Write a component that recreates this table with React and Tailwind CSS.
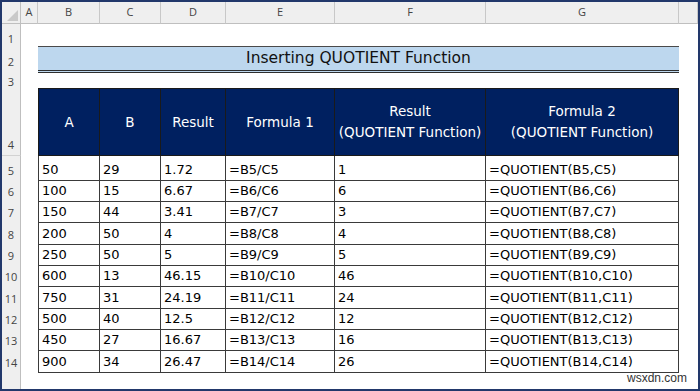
import React from "react";

const cols = "grid grid-cols-[19px_17px_62px_61px_65px_109px_151px_193px_1fr]";

const data = [
  ["50", "29", "1.72", "=B5/C5", "1", "=QUOTIENT(B5,C5)"],
  ["100", "15", "6.67", "=B6/C6", "6", "=QUOTIENT(B6,C6)"],
  ["150", "44", "3.41", "=B7/C7", "3", "=QUOTIENT(B7,C7)"],
  ["200", "50", "4", "=B8/C8", "4", "=QUOTIENT(B8,C8)"],
  ["250", "50", "5", "=B9/C9", "5", "=QUOTIENT(B9,C9)"],
  ["600", "13", "46.15", "=B10/C10", "46", "=QUOTIENT(B10,C10)"],
  ["750", "31", "24.19", "=B11/C11", "24", "=QUOTIENT(B11,C11)"],
  ["500", "40", "12.5", "=B12/C12", "12", "=QUOTIENT(B12,C12)"],
  ["450", "27", "16.67", "=B13/C13", "16", "=QUOTIENT(B13,C13)"],
  ["900", "34", "26.47", "=B14/C14", "26", "=QUOTIENT(B14,C14)"],
];

function RowHead({ n }) {
  return (
    <div className="flex items-center justify-center pt-[7px] bg-[#efefef] border-r border-r-[#bfbfbf] border-b border-b-[#d2d2d2] text-[11px] text-[#444] font-['Open_Sans',sans-serif]">
      {n}
    </div>
  );
}

export default function App() {
  const letters = ["A", "B", "C", "D", "E", "F", "G", ""];
  return (
    <div className="w-[700px] h-[391px] border-2 border-[#22386b] bg-white overflow-hidden flex flex-col font-['DejaVu_Sans',sans-serif]">
      {/* column header */}
      <div className={`${cols} h-[22px] shrink-0`}>
        <div className="relative bg-[#efefef] border-r border-r-[#bfbfbf] border-b border-b-[#bfbfbf]">
          <svg className="absolute right-[2px] bottom-[2px]" width="11" height="11" viewBox="0 0 11 11">
            <polygon points="11,0 11,11 0,11" fill="#c9c9c9" />
          </svg>
        </div>
        {letters.map((l, i) => (
          <div
            key={i}
            className="flex items-center justify-center bg-[#efefef] border-r border-r-[#c8c8c8] border-b border-b-[#bfbfbf] text-[11px] text-[#444] font-['Open_Sans',sans-serif]"
          >
            {l}
          </div>
        ))}
      </div>

      {/* row 1 */}
      <div className={`${cols} h-[21px] shrink-0`}>
        <RowHead n="1" />
      </div>

      {/* row 2 title */}
      <div className={`${cols} h-[22px] shrink-0`}>
        <RowHead n="2" />
        <div />
        <div className="col-span-6 mt-[1px] bg-[#bdd7ee] border-t border-t-[#4a4a4a] border-b-[3px] border-double border-b-[#2e2e2e] flex items-center justify-center text-[15.5px] text-[#111]">
          Inserting QUOTIENT Function
        </div>
      </div>

      {/* row 3 */}
      <div className={`${cols} h-[21px] shrink-0`}>
        <RowHead n="3" />
      </div>

      {/* row 4 header */}
      <div className={`${cols} h-[68px] shrink-0`}>
        <div className="flex items-end justify-center pb-[2px] bg-[#efefef] border-r border-r-[#bfbfbf] border-b border-b-[#d2d2d2] text-[11px] text-[#444] font-['Open_Sans',sans-serif]">
          4
        </div>
        <div />
        {[
          ["A"],
          ["B"],
          ["Result"],
          ["Formula 1"],
          ["Result", "(QUOTIENT Function)"],
          ["Formula 2", "(QUOTIENT Function)"],
        ].map((lines, i) => (
          <div
            key={i}
            className={`flex flex-col items-center justify-center bg-[#002060] text-white text-[13.5px] leading-[21px] border-t border-r border-b border-[#1a1a1a] ${i === 0 ? "border-l" : ""}`}
          >
            {lines.map((t, j) => (
              <span key={j}>{t}</span>
            ))}
          </div>
        ))}
      </div>

      {/* data rows */}
      {data.map((row, r) => (
        <div key={r} className={`${cols} ${r % 3 === 2 ? "h-[22px]" : "h-[21px]"} shrink-0`}>
          <RowHead n={String(r + 5)} />
          <div />
          {row.map((v, c) => (
            <div
              key={c}
              className={`flex items-center pl-[3px] pt-[4px] text-[13px] text-black border-r border-b border-[#3a3a3a] ${c === 0 ? "border-l" : ""}`}
            >
              {v}
            </div>
          ))}
        </div>
      ))}

      {/* row 15 partial */}
      <div className={`${cols} flex-1`}>
        <div className="bg-[#efefef] border-r border-r-[#bfbfbf]" />
        <div className="col-span-7 relative">
          <span className="absolute right-[-8px] bottom-[2px] text-[12px] text-[#333] font-['Liberation_Sans',sans-serif]">
            wsxdn.com
          </span>
        </div>
      </div>
    </div>
  );
}
